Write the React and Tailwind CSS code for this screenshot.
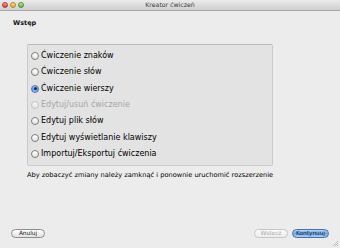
import React from "react";

const items = [
  { label: "Ćwiczenie znaków" },
  { label: "Ćwiczenie słów" },
  { label: "Ćwiczenie wierszy", checked: true },
  { label: "Edytuj/usuń ćwiczenie", disabled: true },
  { label: "Edytuj plik słów" },
  { label: "Edytuj wyświetlanie klawiszy" },
  { label: "Importuj/Eksportuj ćwiczenia" },
];

function Radio({ checked, disabled }) {
  if (checked) {
    return (
      <span className="w-[8px] h-[8px] rounded-full border border-[#4a78b5] bg-gradient-to-b from-[#a9cdf5] via-[#5c9de6] to-[#8ec1f4] flex items-center justify-center shrink-0">
        <span className="w-[3px] h-[3px] rounded-full bg-[#1b2a44]" />
      </span>
    );
  }
  return (
    <span
      className={
        disabled
          ? "w-[8px] h-[8px] rounded-full border border-[#c4c4c4] bg-gradient-to-b from-[#f4f4f4] to-[#e6e6e6] shrink-0"
          : "w-[8px] h-[8px] rounded-full border border-[#7d7d7d] bg-gradient-to-b from-[#ffffff] to-[#e4e4e4] shrink-0"
      }
    />
  );
}

function TrafficLight({ from, to, border }) {
  return (
    <span
      className={`w-[6px] h-[6px] rounded-full border ${border} bg-gradient-to-b ${from} ${to}`}
    />
  );
}

export default function App() {
  return (
    <div
      className="w-[340px] h-[248px] bg-[#ececec] flex flex-col overflow-hidden relative"
      style={{ fontFamily: '"DejaVu Sans", "Noto Sans", sans-serif' }}
    >
      {/* title bar */}
      <div className="h-[11px] bg-gradient-to-b from-[#ebebeb] to-[#cfcfcf] border-b border-[#a8a8a8] grid grid-cols-[1fr_auto_1fr] items-center">
        <div className="flex items-center gap-[2px] pl-[2px]">
          <TrafficLight from="from-[#f7a29c]" to="to-[#d2392f]" border="border-[#b23a33]" />
          <TrafficLight from="from-[#fbe0a0]" to="to-[#e2a22c]" border="border-[#b98526]" />
          <TrafficLight from="from-[#c6eca2]" to="to-[#62b23a]" border="border-[#4e8e2f]" />
        </div>
        <div className="text-[6.2px] leading-[10px] text-[#3a3a3a]">Kreator ćwiczeń</div>
        <div />
      </div>

      {/* heading */}
      <div className="pl-[13px] mt-[8px] text-[6.5px] leading-[9px] font-bold text-[#111]">
        Wstęp
      </div>

      {/* group box */}
      <div className="ml-[27px] mt-[16px] w-[246px] h-[122px] bg-[#e3e3e3] border border-[#cacaca] border-t-[#b9b9b9] rounded-[2px] pt-[3px] pl-[3px] flex flex-col">
        {items.map((it) => (
          <div
            key={it.label}
            className="h-[16.33px] flex items-center gap-[2px]"
          >
            <Radio checked={it.checked} disabled={it.disabled} />
            <span
              className={
                it.disabled
                  ? "text-[8px] leading-[10px] text-[#a6a6a6]"
                  : "text-[8px] leading-[10px] text-[#000]"
              }
            >
              {it.label}
            </span>
          </div>
        ))}
      </div>

      {/* note */}
      <div className="ml-[27px] mt-[5px] text-[6.65px] leading-[9px] text-[#000] whitespace-nowrap">
        Aby zobaczyć zmiany należy zamknąć i ponownie uruchomić rozszerzenie
      </div>

      <div className="flex-1" />

      {/* buttons */}
      <div className="flex items-center px-[11px] pb-[10px]">
        <button className="w-[34px] h-[9px] rounded-full border border-[#8e8e8e] bg-gradient-to-b from-[#ffffff] to-[#e2e2e2] text-[5.8px] leading-[7px] text-[#111] flex items-center justify-center">
          Anuluj
        </button>
        <div className="flex-1" />
        <button className="w-[34px] h-[9px] rounded-full border border-[#c6c6c6] bg-gradient-to-b from-[#fbfbfb] to-[#ececec] text-[5.8px] leading-[7px] text-[#a9a9a9] flex items-center justify-center">
          Wstecz
        </button>
        <button className="ml-[4px] w-[37px] h-[9px] rounded-full border border-[#4b6fa6] bg-gradient-to-b from-[#bcd9f7] via-[#6fa7e8] to-[#a7d0f7] text-[5.8px] leading-[7px] text-[#0d1830] flex items-center justify-center">
          Kontynuuj
        </button>
      </div>

      {/* resize grip */}
      <svg className="absolute right-[2px] bottom-[2px]" width="6" height="6" viewBox="0 0 6 6">
        <path d="M6 1 L1 6 M6 3 L3 6 M6 5 L5 6" stroke="#a0a0a0" strokeWidth="0.6" />
      </svg>
    </div>
  );
}
